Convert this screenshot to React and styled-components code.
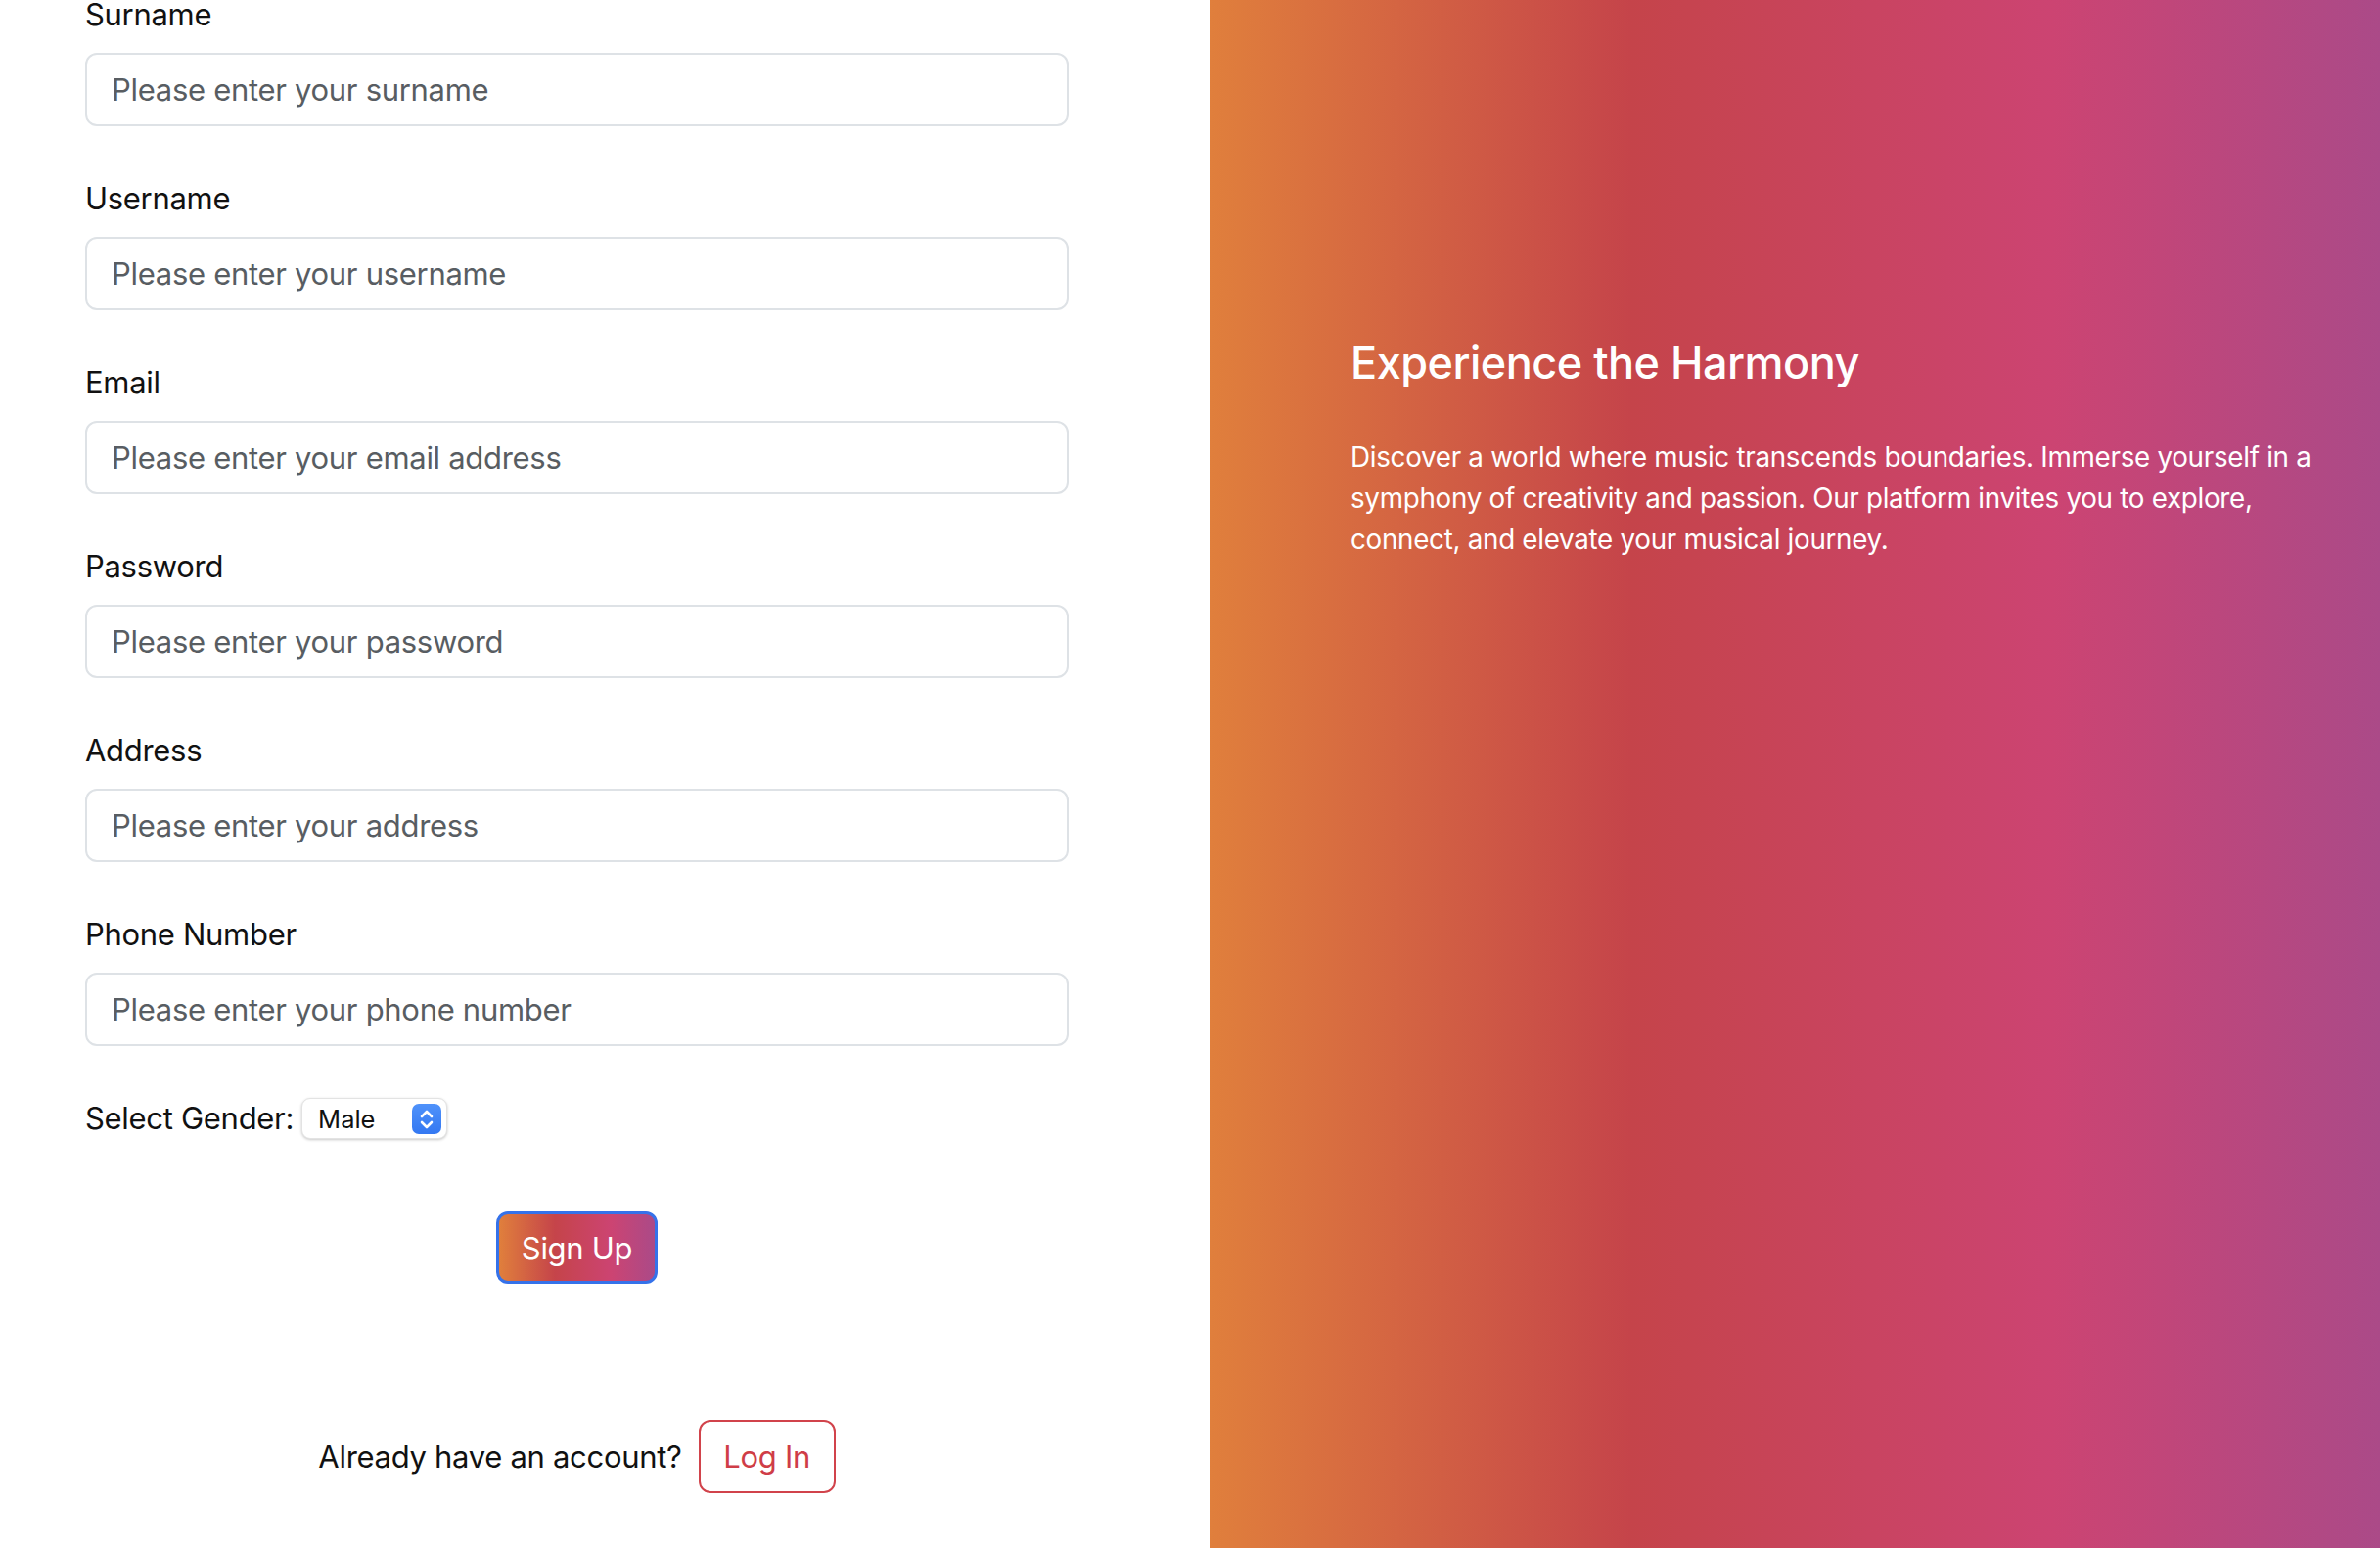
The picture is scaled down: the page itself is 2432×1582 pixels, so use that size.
import styled, { createGlobalStyle } from 'styled-components';

const GlobalStyle = createGlobalStyle`
  html, body {
    margin: 0;
    padding: 0;
  }

  body {
    font-family: Inter, "Noto Sans", "Liberation Sans", sans-serif;
    letter-spacing: -0.3px;
    background: #ffffff;
    color: #111111;
  }

  * {
    box-sizing: border-box;
  }
`;

const Page = styled.div`
  display: grid;
  grid-template-columns: 1236px 1fr;
  height: 1582px;
  overflow: hidden;
`;

const FormSide = styled.section`
  padding: 0 144px 0 87px;
  background: #ffffff;
`;

// the page is scrolled a little, so the first label sits half under the top edge
const Form = styled.form`
  display: flex;
  flex-direction: column;
  margin-top: -8px;
`;

const Field = styled.div`
  display: flex;
  flex-direction: column;
  gap: 16px;
  margin-bottom: 51px;
`;

const Label = styled.label`
  font-size: 31px;
  line-height: 46px;
  color: #111111;
`;

const Input = styled.input`
  height: 75px;
  width: 100%;
  padding: 0 25px;
  font-family: inherit;
  font-size: 31px;
  letter-spacing: -0.3px;
  color: #212529;
  background: #ffffff;
  border: 2px solid #dee2e6;
  border-radius: 12px;
  outline: none;

  &::placeholder {
    color: #585d62;
  }
`;

const GenderRow = styled.div`
  display: flex;
  align-items: center;
  gap: 8px;
  height: 46px;
`;

const SelectWrap = styled.div`
  position: relative;
  width: 149px;
  height: 42px;
`;

const Select = styled.select`
  appearance: none;
  width: 100%;
  height: 100%;
  padding: 0 44px 0 16px;
  font-family: inherit;
  font-size: 25.5px;
  color: #111111;
  background: #ffffff;
  border: 1px solid #e3e3e3;
  border-radius: 9px;
  box-shadow: 0 1px 3px rgba(0, 0, 0, 0.22);
  outline: none;
`;

const Chevrons = styled.span`
  position: absolute;
  top: 6px;
  right: 6px;
  width: 30px;
  height: 31px;
  border-radius: 7px;
  background: linear-gradient(#4f92fa, #3478f2);
  display: flex;
  align-items: center;
  justify-content: center;
  pointer-events: none;
`;

const SignUpButton = styled.button`
  align-self: center;
  margin-top: 72px;
  width: 165px;
  height: 74px;
  font-family: inherit;
  font-size: 31px;
  letter-spacing: -0.3px;
  color: #ffffff;
  background: linear-gradient(to right, #e07f3c 0%, #c5444a 36%, #cc4472 72%, #ab4a88 100%);
  border: 3px solid #3572ea;
  border-radius: 12px;
  cursor: pointer;
`;

const LoginRow = styled.div`
  display: flex;
  align-items: center;
  justify-content: center;
  gap: 17px;
  margin-top: 139px;
  font-size: 31px;
`;

const LoginButton = styled.button`
  width: 140px;
  height: 75px;
  font-family: inherit;
  font-size: 31px;
  letter-spacing: -0.3px;
  color: #cf3d47;
  background: #ffffff;
  border: 2px solid #d1434b;
  border-radius: 12px;
  cursor: pointer;
`;

const Hero = styled.section`
  padding: 343px 62px 0 144px;
  color: #ffffff;
  background: linear-gradient(to right, #e07f3c 0%, #c5444a 36%, #cc4472 72%, #ab4a88 100%);
`;

const HeroTitle = styled.h2`
  margin: 0 0 48px;
  font-size: 45px;
  line-height: 55px;
  font-weight: 500;
  letter-spacing: -0.5px;
`;

const HeroText = styled.p`
  margin: 0;
  font-size: 27.8px;
  line-height: 42px;
`;

const fields = [
  { id: 'surname', label: 'Surname', placeholder: 'Please enter your surname' },
  { id: 'username', label: 'Username', placeholder: 'Please enter your username' },
  { id: 'email', label: 'Email', placeholder: 'Please enter your email address', type: 'email' },
  { id: 'password', label: 'Password', placeholder: 'Please enter your password', type: 'password' },
  { id: 'address', label: 'Address', placeholder: 'Please enter your address' },
  { id: 'phone', label: 'Phone Number', placeholder: 'Please enter your phone number' },
];

const App = () => {
  return (
    <>
      <GlobalStyle />
      <Page>
        <FormSide>
          <Form onSubmit={(e) => e.preventDefault()}>
            {fields.map((f) => (
              <Field key={f.id}>
                <Label htmlFor={f.id}>{f.label}</Label>
                <Input id={f.id} type={f.type || 'text'} placeholder={f.placeholder} />
              </Field>
            ))}
            <GenderRow>
              <Label htmlFor='gender'>Select Gender:</Label>
              <SelectWrap>
                <Select id='gender' defaultValue='male'>
                  <option value='male'>Male</option>
                  <option value='female'>Female</option>
                </Select>
                <Chevrons>
                  <svg width='16' height='22' viewBox='0 0 16 22' fill='none' stroke='#ffffff' strokeWidth='2.6' strokeLinecap='round' strokeLinejoin='round'>
                    <path d='M3 8 L8 3 L13 8' />
                    <path d='M3 14 L8 19 L13 14' />
                  </svg>
                </Chevrons>
              </SelectWrap>
            </GenderRow>
            <SignUpButton type='submit'>Sign Up</SignUpButton>
            <LoginRow>
              <span>Already have an account?</span>
              <LoginButton type='button'>Log In</LoginButton>
            </LoginRow>
          </Form>
        </FormSide>
        <Hero>
          <HeroTitle>Experience the Harmony</HeroTitle>
          <HeroText>
            Discover a world where music transcends boundaries. Immerse yourself in a symphony of
            creativity and passion. Our platform invites you to explore, connect, and elevate your
            musical journey.
          </HeroText>
        </Hero>
      </Page>
    </>
  );
};

export default App;
